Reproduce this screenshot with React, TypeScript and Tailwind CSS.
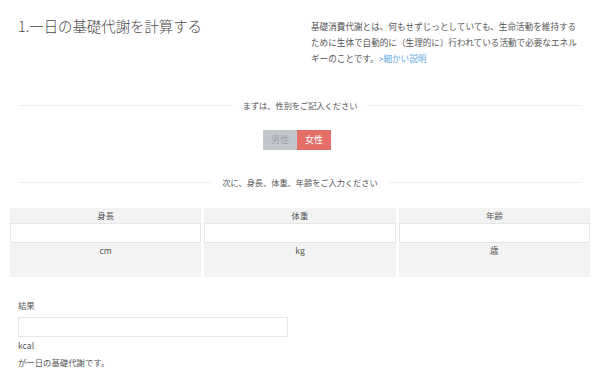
import { useState } from 'react'

type Sex = 'male' | 'female'

const fields = [
  { id: 'height', label: '身長', unit: 'cm' },
  { id: 'weight', label: '体重', unit: 'kg' },
  { id: 'age', label: '年齢', unit: '歳' },
]

function Divider({ text }: { text: string }) {
  return (
    <div className="flex items-center gap-[10px] px-[18px] h-[12px]">
      <div className="h-px flex-1 bg-[#eeeeee]" />
      <span className="text-[8.2px] leading-[12px] text-[#555]">{text}</span>
      <div className="h-px flex-1 bg-[#eeeeee]" />
    </div>
  )
}

export default function App() {
  const [sex, setSex] = useState<Sex>('female')
  const [values, setValues] = useState<Record<string, string>>({ height: '', weight: '', age: '' })

  return (
    <div className="w-[600px] h-[372px] overflow-hidden bg-white text-[#555] font-['Noto_Sans_CJK_JP','Noto_Sans',sans-serif]">
      <header className="flex pt-[18px] px-[18px]">
        <h1 className="w-[293px] text-[14.4px] leading-[16px] text-[#4a4a4a] font-light">1.一日の基礎代謝を計算する</h1>
        <p className="whitespace-nowrap text-[8.6px] leading-[16px] text-[#555]">
          基礎消費代謝とは、何もせずじっとしていても、生命活動を維持する
          <br />
          ために生体で自動的に（生理的に）行われている活動で必要なエネル
          <br />
          ギーのことです。<a className="text-[#5fa9df]">&gt;細かい説明</a>
        </p>
      </header>

      <div className="mt-[33px]">
        <Divider text="まずは、性別をご記入ください" />
      </div>

      <div className="mt-[19px] flex justify-center pr-[6px]">
        <button
          type="button"
          onClick={() => setSex('male')}
          className={`h-[20px] w-[34px] text-[9px] ${sex === 'male' ? 'bg-[#e56f66] text-white' : 'bg-[#c1c6cc] text-[#9ca1a7]'}`}
        >
          男性
        </button>
        <button
          type="button"
          onClick={() => setSex('female')}
          className={`h-[20px] w-[34px] text-[9px] ${sex === 'female' ? 'bg-[#e56f66] text-white' : 'bg-[#c1c6cc] text-[#9ca1a7]'}`}
        >
          女性
        </button>
      </div>

      <div className="mt-[26px]">
        <Divider text="次に、身長、体重、年齢をご入力ください" />
      </div>

      <div className="mt-[20px] grid grid-cols-3 gap-[3px] px-[10px]">
        {fields.map((field) => (
          <div key={field.id} className="flex flex-col">
            <div className="h-[15px] bg-[#f3f3f3] text-center text-[8.4px] leading-[15px]">{field.label}</div>
            <input
              className="h-[20px] w-full border border-[#e6e6e6] bg-white px-1 text-[9px] outline-none"
              value={values[field.id]}
              onChange={(event) => setValues((current) => ({ ...current, [field.id]: event.target.value }))}
            />
            <div className="h-[34px] bg-[#f3f3f3] text-center text-[8.6px] leading-[14px]">{field.unit}</div>
          </div>
        ))}
      </div>

      <div className="mt-[22px] px-[18px]">
        <div className="text-[8.4px] leading-[12px]">結果</div>
        <input className="mt-px h-[20px] w-[270px] border border-[#e6e6e6] bg-white px-1 text-[9px] outline-none" readOnly />
        <div className="text-[8.6px] leading-[17px]">kcal</div>
        <div className="text-[8.4px] leading-[17px]">が一日の基礎代謝です。</div>
      </div>
    </div>
  )
}
